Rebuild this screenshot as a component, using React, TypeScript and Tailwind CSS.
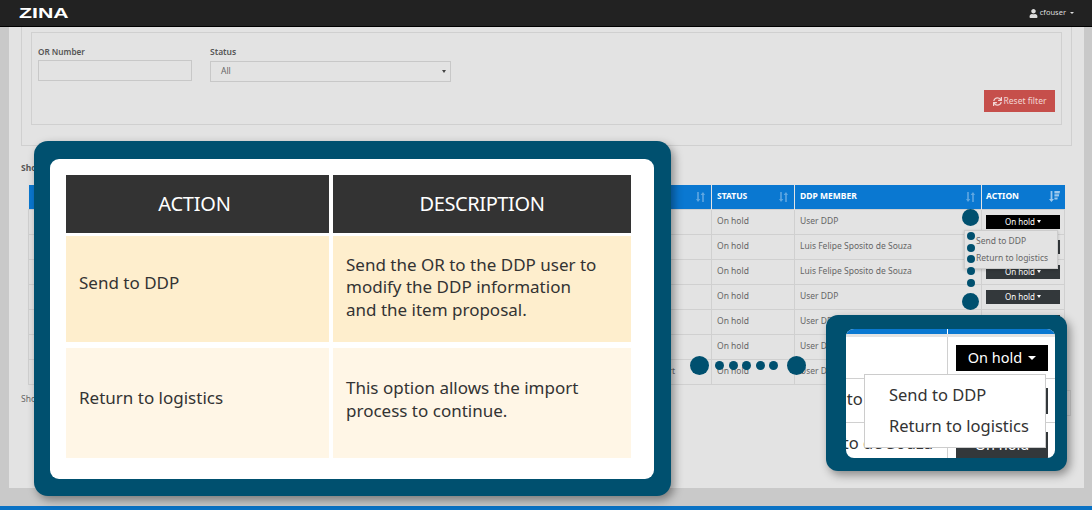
import { FaUser, FaSync } from 'react-icons/fa';

const rows = [
  { member: 'User DDP', first: '', active: true },
  { member: 'Luis Felipe Sposito de Souza', first: '' },
  { member: 'Luis Felipe Sposito de Souza', first: '' },
  { member: 'User DDP', first: '' },
  { member: 'User DDP', first: '' },
  { member: 'User DDP', first: '' },
  { member: 'User DDP', first: 'Import' },
];

const hDots = [719, 733, 746, 760, 773];
const vDots = [236, 247.5, 259, 271, 283];

function Caret({ className }: { className: string }) {
  return <span className={`inline-block border-x-transparent border-t-current ${className}`} />;
}

// down arrow + up arrow, the table's idle sort marker
function SortIcon() {
  return (
    <svg viewBox="0 0 9 10" className="h-[10px] w-[9px] text-white/35" fill="currentColor">
      <path d="M1.2 0h1.6v7H4.4L2 10 0 7h1.2z" />
      <path d="M6.2 10h1.6V3H9L7 0 4.6 3h1.6z" />
    </svg>
  );
}

// the active column: down arrow with bars getting shorter
function SortActiveIcon() {
  return (
    <svg viewBox="0 0 11 11" className="h-[11px] w-[11px] text-white/60" fill="currentColor">
      <path d="M1.6 0h1.8v8H5l-2.6 3L0 8h1.6z" />
      <path d="M5.4 0H11l-.4 2.4H5.4zM5.4 3.2h4.8l-.4 2.4H5.4zM5.4 6.4h3.4l-.4 2.2H5.4z" />
    </svg>
  );
}

function OrdersTable() {
  return (
    <table className="w-[1036px] table-fixed border-collapse text-[8.5px] text-[#666]">
      <colgroup>
        <col className="w-[683px]" />
        <col className="w-[83px]" />
        <col className="w-[187px]" />
        <col className="w-[83px]" />
      </colgroup>
      <thead>
        <tr className="h-[24px] bg-[#0a78d1] text-left text-white font-bold">
          <th className="border-r border-[#e3e3e3]">
            <div className="flex justify-end pr-[6px]"><SortIcon /></div>
          </th>
          <th className="border-r border-[#e3e3e3] pl-[5px]">
            <div className="flex items-center justify-between pr-[6px]">STATUS<SortIcon /></div>
          </th>
          <th className="border-r border-[#e3e3e3] pl-[5px]">
            <div className="flex items-center justify-between pr-[6px]">DDP MEMBER<SortIcon /></div>
          </th>
          <th className="pl-[4px]">
            <div className="flex items-center justify-between pr-[5px]">ACTION<SortActiveIcon /></div>
          </th>
        </tr>
      </thead>
      <tbody>
        {rows.map((row, i) => (
          <tr key={i} className="h-[25px]">
            <td className="border border-[#d0d0d0] pr-[36px] text-right">{row.first}</td>
            <td className="border border-[#d0d0d0] pl-[5px]">On hold</td>
            <td className="border border-[#d0d0d0] pl-[5px]">{row.member}</td>
            <td className="border border-[#d0d0d0] px-[4px]">
              <button className={`flex h-[14px] w-[74px] items-center justify-center gap-[2px] text-[8px] text-white ${row.active ? 'bg-black' : 'bg-[#33383b]'}`}>
                On hold
                <Caret className="border-x-[2.5px] border-t-[3px]" />
              </button>
            </td>
          </tr>
        ))}
      </tbody>
    </table>
  );
}

function ActionsCallout() {
  return (
    <div className="absolute left-[34px] top-[141px] w-[637px] h-[355px] rounded-[14px] bg-[#00506f] p-[18px_17px_17px_16px] shadow-[3px_4px_10px_rgba(0,0,0,0.4)]">
      <div className="h-full rounded-[9px] bg-white pl-[16px] pr-[23px] pt-[15.5px] pb-[22px]">
        <div className="grid grid-cols-[263px_298px] grid-rows-[58px_106px_113px] gap-x-[4px] gap-y-[3px] text-[17px] leading-[22.5px] text-[#333]">
          <div className="flex items-center justify-center bg-[#333] pr-[6px] pt-[1px] text-[20px] tracking-[-0.2px] text-white">ACTION</div>
          <div className="flex items-center justify-center bg-[#333] pt-[1px] text-[20px] tracking-[-0.4px] text-white">DESCRIPTION</div>
          <div className="flex items-center bg-[#feeecd] pb-[10px] pl-[13px]">Send to DDP</div>
          <div className="flex items-center bg-[#feeecd] pb-[2px] pl-[13px]">
            <p>Send the OR to the DDP user to<br />modify the DDP information<br />and the item proposal.</p>
          </div>
          <div className="mt-[3px] flex items-center bg-[#fff6e6] pb-[8px] pl-[13px]">Return to logistics</div>
          <div className="mt-[3px] flex items-center bg-[#fff6e6] pb-[6px] pl-[13px]">
            <p>This option allows the import<br />process to continue.</p>
          </div>
        </div>
      </div>
    </div>
  );
}

function MenuCallout() {
  return (
    <div className="absolute left-[826px] top-[315px] w-[241px] h-[156px] rounded-[12px] bg-[#00506f] p-[14px_12px_13px_20px] shadow-[3px_4px_10px_rgba(0,0,0,0.4)]">
      <div className="relative h-full overflow-hidden rounded-[8px] bg-white text-[16.5px] text-[#333]">
        <div className="flex h-[5px] bg-[#0a78d1]">
          <div className="w-[102px] border-r border-white" />
        </div>
        <div className="h-[3px] bg-[#e3e3e3]" />
        <div className="grid grid-cols-[102px_107px] grid-rows-[42px_44px_44px]">
          <div className="border-r border-b border-[#d0d0d0]" />
          <div className="flex items-center border-b border-[#d0d0d0] pl-[8px]">
            <button className="flex h-[26px] w-[92px] items-center justify-center gap-[6px] bg-black text-[14.5px] text-white">
              On hold
              <Caret className="border-x-[4px] border-t-[4px]" />
            </button>
          </div>
          <div className="flex items-center justify-end overflow-hidden border-r border-b border-[#d0d0d0] whitespace-nowrap pb-[2px] pr-[10px]">Luis Felipe Sposito de Souza</div>
          <div className="flex items-center border-b border-[#d0d0d0] pl-[8px]">
            <div className="h-[26px] w-[92px] bg-[#33383b]" />
          </div>
          <div className="flex items-start justify-end overflow-hidden border-r border-[#d0d0d0] whitespace-nowrap pt-[8px] pr-[14px]">Luis Felipe Sposito de Souza</div>
          <div className="pl-[8px] pt-[9px]">
            <div className="flex h-[26px] w-[92px] items-center justify-center bg-[#33383b] text-[14.5px] text-white">On hold</div>
          </div>
        </div>
        <div className="absolute left-[18px] top-[45px] flex h-[74px] w-[182px] flex-col gap-[8px] border border-[#ccc] bg-white pl-[24px] pt-[8px] leading-[23px]">
          <span>Send to DDP</span>
          <span>Return to logistics</span>
        </div>
      </div>
    </div>
  );
}

function Dot({ x, y, r }: { x: number; y: number; r: number }) {
  return (
    <span
      className="absolute rounded-full bg-[#00506f]"
      style={{ left: x - r, top: y - r, width: r * 2, height: r * 2 }}
    />
  );
}

export default function App() {
  return (
    <div className="relative flex h-[510px] w-[1092px] flex-col overflow-hidden bg-[#c9c9c9]" style={{ fontFamily: '"Noto Sans", sans-serif' }}>
      {/* Top bar */}
      <header className="flex h-[27px] shrink-0 items-center justify-between border-b border-black bg-[#222] pl-[19px] pr-[18px] text-white">
        <span className="origin-left scale-x-[1.52] text-[14px] font-bold leading-none" style={{ fontFamily: '"Liberation Sans", sans-serif' }}>ZINA</span>
        <div className="flex items-center gap-[2px] text-[7.5px] text-[#ddd]">
          <FaUser className="h-[9px] w-[9px]" />
          cfouser
          <Caret className="ml-[2px] border-x-[2px] border-t-[2px]" />
        </div>
      </header>

      {/* Page body */}
      <main className="ml-[9px] mr-[8px] h-[461px] shrink-0 bg-[#e3e3e3] pl-[12px] pr-[12px]">
        <section className="h-[119px] border-x border-b border-[#d0d0d0] pl-[9px] pr-[9px] pt-[5px]">
          <div className="relative flex h-[93px] gap-[18px] border border-[#d0d0d0] pl-[6px] pt-[13px]">
            <label className="flex w-[154px] flex-col gap-[2px] text-[8.2px] font-semibold text-[#555]">
              OR Number
              <div className="h-[21px] border border-[#c8c8c8]" />
            </label>
            <label className="flex w-[241px] flex-col gap-[2px] text-[8.5px] font-semibold text-[#555]">
              Status
              <div className="flex h-[21px] items-center justify-between border border-[#c8c8c8] pl-[10px] pr-[4px] font-normal text-[#666]">
                All
                <Caret className="border-x-[2px] border-t-[3px] text-[#444]" />
              </div>
            </label>
            <button className="absolute right-[6px] bottom-[12px] flex h-[22px] w-[71px] items-center justify-center gap-[2px] bg-[#c64f4b] text-[8.5px] text-[#f3d6d4]">
              <FaSync className="h-[9px] w-[9px]" />
              Reset filter
            </button>
          </div>
        </section>
        <p className="mt-[15px] h-[14px] text-[8.5px] font-bold leading-[14px] text-[#555]">Showing</p>
        <div className="ml-[7px] mt-[10px]">
          <OrdersTable />
        </div>
        <p className="mt-[8px] text-[8.5px] leading-[12px] text-[#666]">Showing</p>
      </main>

      <footer className="mt-[18px] h-[4px] shrink-0 bg-[#0a72c4]" />

      {/* Open dropdown under the guide */}
      <div className="absolute left-[964px] top-[230px] flex h-[39px] w-[94px] flex-col gap-[3px] border border-[#ccc] bg-[#e3e3e3] pl-[11px] pt-[3px] text-[8.5px] leading-[14px] text-[#666] shadow-[0_1px_3px_rgba(0,0,0,0.2)]">
        <span>Send to DDP</span>
        <span>Return to logistics</span>
      </div>

      {/* Edge of a box that sticks out past the small callout */}
      <div className="absolute left-[1060px] top-[390px] h-[26px] w-[11px] border border-[#d0d0d0]" />

      {/* Dotted guide lines */}
      <Dot x={970.5} y={217.5} r={8.5} />
      {vDots.map((y) => <Dot key={y} x={970.5} y={y} r={4} />)}
      <Dot x={970.5} y={301} r={8.5} />
      <Dot x={699} y={365.5} r={9.5} />
      {hDots.map((x) => <Dot key={x} x={x} y={365.5} r={4.5} />)}
      <Dot x={796.5} y={365.5} r={9.5} />

      <ActionsCallout />
      <MenuCallout />
    </div>
  );
}
